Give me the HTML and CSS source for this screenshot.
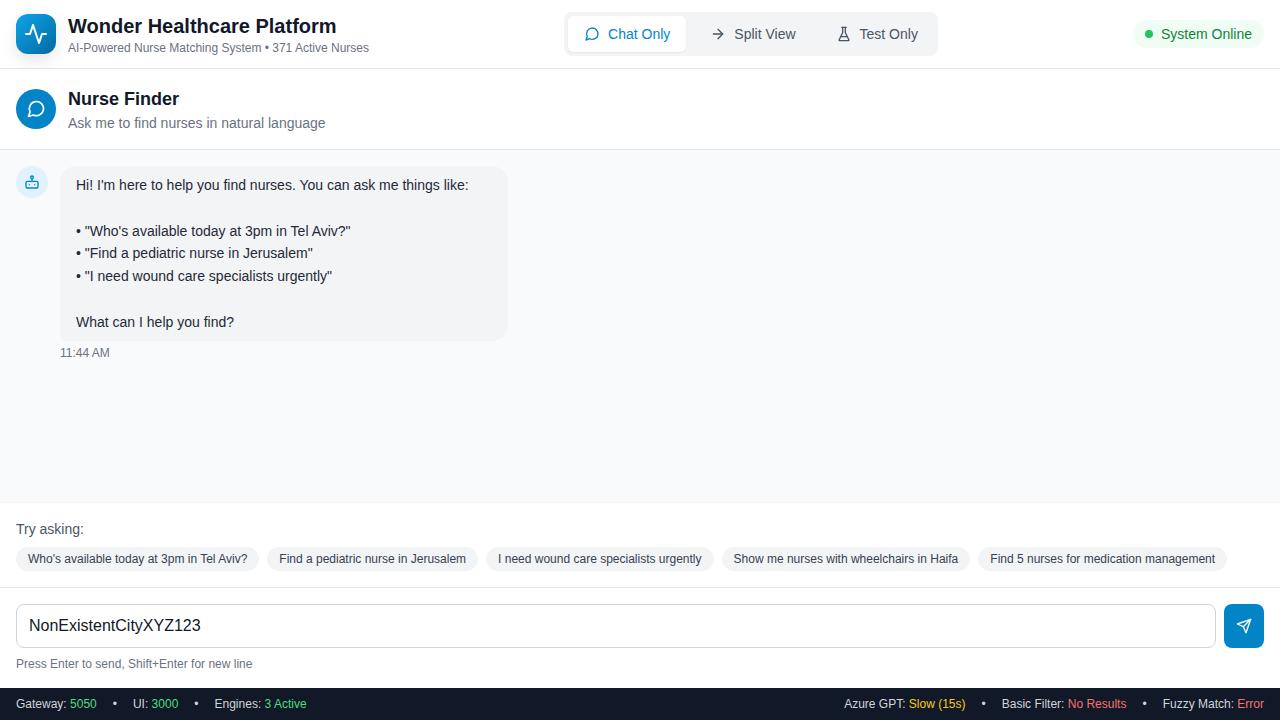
FILE: index.html
```html
<!DOCTYPE html>
<html lang="en">
<head>
<meta charset="utf-8">
<title>Wonder Healthcare Platform</title>
<link rel="stylesheet" href="styles.css">
</head>
<body>
<div class="app">
  <header class="topbar">
    <div class="brand">
      <div class="logo"><svg class="icon icon-lg" viewBox="0 0 24 24"><path d="M22 12h-4l-3 9L9 3l-3 9H2"/></svg></div>
      <div>
        <h1 class="brand-title">Wonder Healthcare Platform</h1>
        <p class="brand-sub">AI-Powered Nurse Matching System • 371 Active Nurses</p>
      </div>
    </div>
    <nav class="tabs">
      <button class="tab tab-active"><svg class="icon" viewBox="0 0 24 24"><path d="m3 21 1.9-5.7a8.5 8.5 0 1 1 3.8 3.8z"/></svg>Chat Only</button>
      <button class="tab"><svg class="icon" viewBox="0 0 24 24"><path d="M5 12h14"/><path d="m12 5 7 7-7 7"/></svg>Split View</button>
      <button class="tab"><svg class="icon" viewBox="0 0 24 24"><path d="M10 2v7.527a2 2 0 0 1-.211.896L4.72 20.55a1 1 0 0 0 .9 1.45h12.76a1 1 0 0 0 .9-1.45l-5.069-10.127A2 2 0 0 1 14 9.527V2"/><path d="M8.5 2h7"/><path d="M7 16h10"/></svg>Test Only</button>
    </nav>
    <div class="status"><span class="status-dot"></span>System Online</div>
  </header>

  <section class="chat-header">
    <div class="chat-icon"><svg class="icon icon-md" viewBox="0 0 24 24"><path d="m3 21 1.9-5.7a8.5 8.5 0 1 1 3.8 3.8z"/></svg></div>
    <div>
      <h2 class="chat-title">Nurse Finder</h2>
      <p class="chat-sub">Ask me to find nurses in natural language</p>
    </div>
  </section>

  <main class="messages">
    <div class="message">
      <div class="avatar"><svg class="icon" viewBox="0 0 24 24"><rect x="3" y="11" width="18" height="10" rx="2"/><circle cx="12" cy="5" r="2"/><path d="M12 7v4"/><path d="M8 16h.01"/><path d="M16 16h.01"/></svg></div>
      <div>
        <div class="bubble">Hi! I'm here to help you find nurses. You can ask me things like:

• "Who's available today at 3pm in Tel Aviv?"
• "Find a pediatric nurse in Jerusalem"
• "I need wound care specialists urgently"

What can I help you find?</div>
        <p class="time">11:44 AM</p>
      </div>
    </div>
  </main>

  <section class="suggestions">
    <p class="suggestions-label">Try asking:</p>
    <div class="chips">
      <button class="chip">Who's available today at 3pm in Tel Aviv?</button>
      <button class="chip">Find a pediatric nurse in Jerusalem</button>
      <button class="chip">I need wound care specialists urgently</button>
      <button class="chip">Show me nurses with wheelchairs in Haifa</button>
      <button class="chip">Find 5 nurses for medication management</button>
    </div>
  </section>

  <section class="composer">
    <div class="composer-row">
      <input class="composer-input" type="text" value="NonExistentCityXYZ123">
      <button class="send" aria-label="Send"><svg class="icon" viewBox="0 0 24 24"><path d="m22 2-7 20-4-9-9-4Z"/><path d="M22 2 11 13"/></svg></button>
    </div>
    <p class="hint">Press Enter to send, Shift+Enter for new line</p>
  </section>

  <footer class="footer">
    <div class="footer-group">
      <span>Gateway: <span class="ok">5050</span></span><span>•</span>
      <span>UI: <span class="ok">3000</span></span><span>•</span>
      <span>Engines: <span class="ok">3 Active</span></span>
    </div>
    <div class="footer-group">
      <span>Azure GPT: <span class="warn">Slow (15s)</span></span><span>•</span>
      <span>Basic Filter: <span class="bad">No Results</span></span><span>•</span>
      <span>Fuzzy Match: <span class="bad">Error</span></span>
    </div>
  </footer>
</div>
</body>
</html>
```
FILE: styles.css
```css
* { box-sizing: border-box; margin: 0; padding: 0; }
body { font-family: "Liberation Sans", Arial, sans-serif; font-size: 14px; line-height: 20px; color: #111827; }
button, input { font: inherit; color: inherit; border: 0; background: none; }
.app { height: 100vh; display: flex; flex-direction: column; background: #f9fafb; overflow: hidden; }
.icon { width: 16px; height: 16px; flex: none; display: block; fill: none; stroke: currentColor; stroke-width: 2; stroke-linecap: round; stroke-linejoin: round; }
.icon-md { width: 20px; height: 20px; }
.icon-lg { width: 24px; height: 24px; }

.topbar { display: flex; align-items: center; justify-content: space-between; padding: 12px 16px; background: #fff; border-bottom: 1px solid #e5e7eb; }
.brand { display: flex; align-items: center; gap: 12px; }
.logo { width: 40px; height: 40px; display: flex; align-items: center; justify-content: center; color: #fff; border-radius: 12px; background: linear-gradient(to bottom right, #0ea5e9, #0369a1); box-shadow: 0 2px 15px -3px rgba(0, 0, 0, 0.07), 0 10px 20px -2px rgba(0, 0, 0, 0.08); }
.brand-title { font-size: 20px; line-height: 28px; font-weight: 700; }
.brand-sub { font-size: 12px; line-height: 16px; color: #6b7280; }
.tabs { display: flex; gap: 8px; padding: 4px; background: #f3f4f6; border-radius: 8px; }
.tab { display: flex; align-items: center; gap: 8px; padding: 8px 16px; border-radius: 6px; color: #4b5563; }
.tab-active { background: #fff; color: #0284c7; box-shadow: 0 1px 2px rgba(0, 0, 0, 0.05); }
.status { display: flex; align-items: center; gap: 8px; padding: 4px 12px; border-radius: 999px; background: #f0fdf4; color: #15803d; }
.status-dot { width: 8px; height: 8px; border-radius: 50%; background: #22c55e; }

.chat-header { display: flex; align-items: center; gap: 12px; padding: 16px; background: #fff; border-bottom: 1px solid #e5e7eb; }
.chat-icon { width: 40px; height: 40px; display: flex; align-items: center; justify-content: center; border-radius: 50%; background: #0284c7; color: #fff; }
.chat-title { font-size: 18px; line-height: 28px; font-weight: 600; }
.chat-sub { color: #6b7280; }

.messages { flex: 1; min-height: 0; padding: 16px; background: #f9fafb; }
.message { display: flex; gap: 12px; }
.avatar { width: 32px; height: 32px; display: flex; align-items: center; justify-content: center; border-radius: 50%; background: #e0f2fe; color: #0284c7; }
.bubble { width: 448px; padding: 8px 16px; border-radius: 16px 16px 16px 6px; background: #f3f4f6; color: #1f2937; line-height: 22.75px; white-space: pre-wrap; }
.time { margin-top: 4px; font-size: 12px; line-height: 16px; color: #6b7280; }

.suggestions { padding: 16px; background: #fff; border-top: 1px solid #f3f4f6; }
.suggestions-label { margin-bottom: 8px; color: #4b5563; }
.chips { display: flex; gap: 8px; }
.chip { padding: 4px 12px; border-radius: 999px; background: #f3f4f6; color: #374151; font-size: 12px; line-height: 16px; white-space: nowrap; }

.composer { padding: 16px; background: #fff; border-top: 1px solid #e5e7eb; }
.composer-row { display: flex; gap: 8px; }
.composer-input { flex: 1; height: 44px; padding: 8px 12px; border: 1px solid #d1d5db; border-radius: 8px; background: #fff; font-size: 16px; line-height: 24px; }
.send { width: 40px; display: flex; align-items: center; justify-content: center; border-radius: 8px; background: #0284c7; color: #fff; }
.hint { margin-top: 8px; font-size: 12px; line-height: 16px; color: #6b7280; }

.footer { display: flex; justify-content: space-between; padding: 8px 16px; background: #111827; color: #d1d5db; font-size: 12px; line-height: 16px; }
.footer-group { display: flex; gap: 16px; }
.ok { color: #4ade80; }
.warn { color: #facc15; }
.bad { color: #f87171; }
```
